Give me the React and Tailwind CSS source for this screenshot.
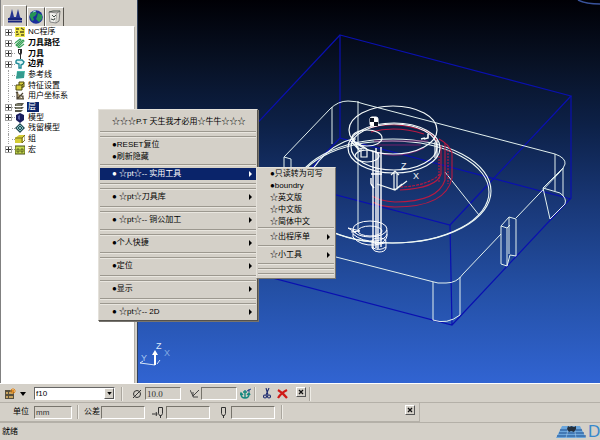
import React from 'react';
import clsx from 'clsx';

const treeItems = [
  { label: 'NC程序', icon: 'nc', expandable: true },
  { label: '刀具路径', icon: 'toolpath', expandable: true, bold: true },
  { label: '刀具', icon: 'tool', expandable: true, bold: true },
  { label: '边界', icon: 'boundary', expandable: true, bold: true },
  { label: '参考线', icon: 'pattern' },
  { label: '特征设置', icon: 'feature' },
  { label: '用户坐标系', icon: 'workplane' },
  { label: '层', icon: 'level', expandable: true, selected: true },
  { label: '模型', icon: 'model', expandable: true },
  { label: '残留模型', icon: 'stock' },
  { label: '组', icon: 'group' },
  { label: '宏', icon: 'macro', expandable: true },
];

const treeIcons = {
  nc: (
    <>
      <path d="M0 0h10v10H0z" fill="#f0e84a" />
      <path d="M1 2h3M6 1l3 2M1 5h2M5 5h4M1 8l3-1M6 8h3" stroke="#55501a" strokeWidth="1.3" />
    </>
  ),
  toolpath: (
    <path d="M0 5l5-4 1 1-5 5 1 1 6-6 1 1-6 6 1 1 5-4" stroke="#35a055" strokeWidth="1.1" fill="none" />
  ),
  tool: (
    <>
      <path d="M3 0h4v4l-1 2v4H5V6L3 4z" fill="#2c2c2c" />
      <path d="M4 1h1v3H4z" fill="#fff" />
    </>
  ),
  boundary: (
    <path d="M2 1h5l2 2-1 2-2 1v3H4V5L1 4V2z" fill="#dff6f6" stroke="#208a96" strokeWidth="1.4" />
  ),
  pattern: (
    <>
      <path d="M2 1h8l-1 7-8 1z" fill="#49b8a8" />
      <path d="M2 3h7M2 5h7M1 7h8" stroke="#187068" strokeWidth=".8" />
    </>
  ),
  feature: (
    <path d="M1 4h3V1h5v5H7v3H1zM4 4h3v3M7 4l2-2" fill="#d8cf3c" stroke="#4d4810" strokeWidth="1" />
  ),
  workplane: (
    <path d="M2 1v7h7M2 8l6-6M4 5h4v3M1 2l1-1 1 1" fill="#a89870" stroke="#4c4434" strokeWidth="1.2" />
  ),
  level: (
    <>
      <path d="M0 2l3-1h6L7 4H0zM0 5h9L7 7H0zM0 8h8l-2 2H0z" fill="#58584c" />
      <path d="M1 3h5M1 6h5" stroke="#b7b79c" strokeWidth=".7" />
    </>
  ),
  model: (
    <>
      <path d="M5 0l4 2v5l-4 3-4-3V2z" fill="#181c5c" />
      <path d="M3 3l2-1v5L3 6z" fill="#5962ad" />
    </>
  ),
  stock: (
    <>
      <path d="M0 5l5-5 5 5-5 5z" fill="#264d55" />
      <path d="M2 5l3-3 3 3-3 3zM3 3l4 4M7 3L3 7" fill="none" stroke="#8bc8c8" strokeWidth=".9" />
    </>
  ),
  group: (
    <>
      <path d="M0 4l4-3h6L8 4v5H0z" fill="#d5cd35" />
      <path d="M0 4h7v5M7 4l3-3v5L7 9" fill="none" stroke="#6c661a" strokeWidth=".9" />
    </>
  ),
  macro: (
    <>
      <path d="M0 1h10v8H0z" fill="#c4d84c" stroke="#454d16" />
      <path d="M2 4h2v3H2zM6 4h2v3H6z" fill="none" stroke="#454d16" strokeWidth=".8" />
    </>
  ),
};

const menuGroups = [
  { lines: 2, items: [{ label: '☆☆☆P.T 天生我才必用☆牛牛☆☆☆' }] },
  { lines: 1, items: [{ label: '●RESET复位' }, { label: '●刷新隐藏' }] },
  { lines: 2, items: [{ label: '● ☆pt☆-- 实用工具', sub: true, active: true }] },
  { lines: 2, items: [{ label: '● ☆pt☆刀具库', sub: true }] },
  { lines: 2, items: [{ label: '● ☆pt☆-- 铜公加工', sub: true }] },
  { lines: 2, items: [{ label: '●个人快捷', sub: true }] },
  { lines: 2, items: [{ label: '●定位', sub: true }] },
  { lines: 2, items: [{ label: '●显示', sub: true }] },
  { lines: 0, items: [{ label: '● ☆pt☆-- 2D', sub: true }] },
];

const subMenuItems = ['●只读转为可写', '●boundry', '☆英文版', '☆中文版', '☆简体中文'];

function Rule() {
  return <div className="h-[2px] border-t border-b border-t-[#9c988f] border-b-[#e9e6df]" />;
}

function MenuItem({ label, sub, active }) {
  return (
    <button
      type="button"
      role="menuitem"
      className={clsx(
        'flex h-3 w-full items-center justify-between pl-3 pr-1 text-left whitespace-pre',
        active ? 'bg-[#0a246a] text-white' : 'text-black'
      )}
    >
      <span>{label}</span>
      {sub && (
        <svg viewBox="0 0 3 6" className="h-[6px] w-[3px]" fill="currentColor">
          <path d="M0 0l3 3-3 3z" />
        </svg>
      )}
    </button>
  );
}

function ContextMenu() {
  return (
    <div
      role="menu"
      className="absolute left-[98px] top-[109px] w-[160px] border border-t-[#e4e1da] border-l-[#e4e1da] border-r-[#55524c] border-b-[#55524c] bg-[#d4d0c8] px-px pt-[6px] pb-[2px] shadow-[1px_1px_0_#77746e]"
    >
      {menuGroups.map((group, i) => (
        <div key={i}>
          {group.items.map((item) => (
            <MenuItem key={item.label} {...item} />
          ))}
          {group.lines === 1 && (
            <div className="pt-px pb-[2px]">
              <Rule />
            </div>
          )}
          {group.lines === 2 && (
            <div className="flex h-[11px] flex-col gap-[3px] pt-[3px]">
              <Rule />
              <Rule />
            </div>
          )}
        </div>
      ))}
    </div>
  );
}

function SubMenu() {
  return (
    <div
      role="menu"
      className="absolute left-[256px] top-[167px] w-[80px] border border-t-[#e4e1da] border-l-[#e4e1da] border-r-[#77746e] border-b-[#77746e] bg-[#d4d0c8] px-px pb-[3px]"
    >
      <div className="grid h-[58px] content-between">
        {subMenuItems.map((label) => (
          <MenuItem key={label} label={label} />
        ))}
      </div>
      <div className="flex flex-col gap-[2px] pt-px">
        <Rule />
        <MenuItem label="☆出程序单" sub />
        <Rule />
        <MenuItem label="☆小工具" sub />
      </div>
      <div className="flex flex-col gap-[3px] pt-[2px]">
        <Rule />
        <Rule />
        <Rule />
      </div>
    </div>
  );
}

function Explorer() {
  const tab = 'flex items-center justify-center border border-b-0 border-t-white border-l-white border-r-[#55524c]';
  return (
    <aside className="flex w-[137px] shrink-0 flex-col border-l border-[#808080] bg-[#d4d0c8]">
      <div className="flex h-[26px] items-end px-[2px]">
        <button type="button" aria-label="浏览器" className={clsx(tab, 'h-[21px] w-6')}>
          <svg viewBox="0 0 14 14" className="h-[14px] w-[14px]">
            <path d="M4 0l2 8h2l2-8 2 8 1 1H1l1-1z" fill="#26358f" />
            <path d="M0 10h14M0 12.5h14" stroke="#17257d" strokeWidth="1.8" />
          </svg>
        </button>
        <button type="button" aria-label="网页" className={clsx(tab, 'h-[19px] w-[18px]')}>
          <svg viewBox="0 0 14 14" className="h-[14px] w-[14px]">
            <circle cx="7" cy="7" r="6.8" fill="#1a2f9c" />
            <path d="M1 4l4-3 3 2-2 3-2 1 1 3-2 1-2-4zM9 3l4 2v4l-3 3-3-3 1-2z" fill="#259457" />
            <path d="M4 2l3-1" stroke="#9ad3e0" />
          </svg>
        </button>
        <button type="button" aria-label="回收站" className={clsx(tab, 'h-[19px] w-[19px]')}>
          <svg viewBox="0 0 14 14" className="h-[14px] w-[14px]">
            <path d="M1 2l8 1-1 10-6-1z" fill="#eeeeea" stroke="#888" />
            <path d="M9 3l3-2-1 10-3 2" fill="#d8d8d0" stroke="#777" />
            <path d="M1 2l4-1 7 0M4 5l2 2 2-2M3 9l3 1 1-2" stroke="#45504a" fill="none" />
          </svg>
        </button>
      </div>
      <div className="mr-[2px] flex-1 border-t border-r border-t-white border-r-[#b4b0a8] bg-white">
        <ul className="flex h-32 flex-col">
          {treeItems.map((item) => (
            <li key={item.label} className="flex flex-1 items-center pl-1">
              {item.expandable ? (
                <button
                  type="button"
                  aria-label={`展开${item.label}`}
                  className="flex h-[7px] w-[7px] shrink-0 items-center justify-center border border-[#a4a4a4] bg-white"
                >
                  <svg viewBox="0 0 5 5" className="h-[5px] w-[5px] shrink-0">
                    <path d="M0 2.5h5M2.5 0v5" stroke="#333" />
                  </svg>
                </button>
              ) : (
                <span className="ml-[3px] h-full w-1 shrink-0 border-l border-dotted border-[#a0a0a0]" />
              )}
              <span className="w-[3px] border-t border-dotted border-[#a0a0a0]" />
              <svg viewBox="0 0 10 10" className="h-[10px] w-[10px] shrink-0">
                {treeIcons[item.icon]}
              </svg>
              <span
                className={clsx(
                  'ml-[2px] px-px leading-[10px] whitespace-nowrap',
                  item.bold && 'font-bold',
                  item.selected && 'bg-[#0a246a] pr-[3px] text-white'
                )}
              >
                {item.label}
              </span>
            </li>
          ))}
        </ul>
      </div>
    </aside>
  );
}

function Viewport() {
  return (
    <main className="min-w-0 flex-1 overflow-hidden border-l border-[#30405c] bg-[linear-gradient(to_bottom,#000005_0%,#081226_17%,#0d2148_33%,#183674_52%,#2450a6_76%,#3164d2_100%)]">
      <svg viewBox="138 0 462 383" preserveAspectRatio="xMinYMin slice" className="block h-full w-full" fill="none">
        {/* stock block */}
        <g stroke="#0a10b0" strokeWidth="1.2">
          <path d="M340 35L571 96L450 225L219 164Z" />
          <path d="M219 164V264L452 325L571 198V96M450 225L452 325" />
          <path d="M340 35V138L571 199M340 138L219 264" />
        </g>
        {/* part outline */}
        <g stroke="#e2f0ee" strokeWidth="1">
          <path d="M284 157L330 109Q338 101 348 101Q357 101 364 104L555 154Q566 158 565 164Q564 168 559 173L516 218M501 234L463 274Q457 283 446 283Q438 284 430 281L336 257L225 228" />
          <path d="M332 107V144M358 101V230M555 154V191M563 168V196M284 157V168M284 157L291 159V168" />
          <path d="M543 188L560 193Q567 198 565 204L550 219ZM543 188L563 168" />
          <path d="M501 226L509 217L516 219V256L510 255L507 266L501 264ZM501 226L507 228V266M509 217V254M507 228L510 225" />
          <path d="M433 282V320Q447 325 460 315V277M445 172L479 215" />
        </g>
        {/* pocket */}
        <g stroke="#eef8f4" strokeWidth="1.1">
          <ellipse cx="393" cy="191" rx="98" ry="52" />
          <ellipse cx="392" cy="192" rx="97" ry="51" />
          <path d="M312 170Q326 150 340 144Q349 139 356 139" />
        </g>
        {/* inner boss walls */}
        <g stroke="#b81a42" strokeWidth="1.1">
          <path d="M369 128Q392 121 419 129Q435 133 437 142M371 132Q396 125 424 134" />
          <path d="M376 152Q398 160 424 148M374 141H428M377 145H421" stroke="#73206c" />
          <path d="M439 139Q449 144 452 153V178Q446 207 395 207Q381 207 373 202" />
          <path d="M445 143V180Q438 202 395 202Q380 201 372 196M441 145V174Q437 188 400 190" />
          <path d="M448 150V184M439 156V182" strokeDasharray="2 1" />
          <path d="M400 187Q429 186 441 173" strokeDasharray="3 1" />
        </g>
        <g stroke="#f6fbfa" strokeWidth="1.2">
          <ellipse cx="393" cy="130" rx="44" ry="24" />
          <ellipse cx="394" cy="148" rx="46" ry="25" />
          <ellipse cx="394" cy="147" rx="43" ry="23" />
          <ellipse cx="367" cy="138" rx="15" ry="8" />
          <ellipse cx="367" cy="156" rx="12" ry="6" />
          <path d="M352 136L358 148L364 149M350 140L360 151M356 142L367 149M361 148V157H367V149M435 142V158M437 140V157" />
          <path d="M421 139L425 138M424 139L428 138V134" strokeWidth="1.6" />
        </g>
        {/* tool */}
        <g stroke="#fff" strokeWidth="1.4">
          <path d="M373 151V249M376 148V248M378 152V249M381 147V247" />
          <path d="M371 174H382M371 184L374 188M371 178V184" />
          <g strokeWidth="1">
            <ellipse cx="370" cy="229" rx="17" ry="8" />
            <ellipse cx="370" cy="231" rx="12" ry="5" />
            <path d="M353 230V237Q360 246 375 245Q386 243 387 236V230M353 234Q362 242 376 241Q386 239 387 234M348 228L360 231L351 232M348 228L356 233" />
            <ellipse cx="379" cy="241" rx="7" ry="3" />
            <path d="M372 242V248Q374 252 379 252Q385 252 386 248V242M372 247Q378 252 386 247" />
          </g>
        </g>
        {/* datum marker */}
        <rect x="370" y="117" width="8" height="9" rx="2" fill="#fff" stroke="#fff" />
        <path d="M370 118h4v4h-4zM374 122h4v4h-4z" fill="#0b1222" />
        {/* work axes */}
        <path d="M394 190V172M391 175L395 171L399 175M377 184L395 190L407 181M394 189H397V174M395 190L402 184" stroke="#f2f8f6" strokeWidth="1.2" />
        <g fill="#f2f6f5" className="font-['Liberation_Sans',sans-serif] text-[9px]">
          <text x="401" y="169">Z</text>
          <text x="413" y="179">X</text>
        </g>
        {/* view axes */}
        <path d="M155 365V352M140 363L155 365M140 363L143 361M160 360L157 364" stroke="#d8e6f6" />
        <path d="M155 365V354" stroke="#fff" strokeWidth="2" />
        <path d="M152 355L155 350L158 355Z" fill="#fff" />
        <g fill="#dcebfa" className="font-['Liberation_Sans',sans-serif] text-[9px]">
          <text x="156" y="349">Z</text>
          <text x="164" y="356" fill="#83aae2">X</text>
          <text x="141" y="361" fill="#a9c6ef">Y</text>
        </g>
        <path d="M578 0Q586 4 600 4" stroke="#39539b" strokeWidth="1.5" />
      </svg>
    </main>
  );
}

function Field({ label, value, className }) {
  return (
    <input
      aria-label={label}
      defaultValue={value}
      className={clsx(
        'h-[13px] shrink-0 border border-t-[#77746c] border-l-[#77746c] border-r-white border-b-white bg-[#d4d0c8] px-px text-[#333] outline-none',
        className
      )}
    />
  );
}

function Divider() {
  return <span className="h-[14px] w-[2px] shrink-0 border-l border-r border-l-[#aaa69e] border-r-[#eeece6]" />;
}

function CloseButton() {
  return (
    <button
      type="button"
      aria-label="关闭"
      className="flex h-[10px] w-[10px] shrink-0 items-center justify-center self-start border border-t-white border-l-white border-r-[#555] border-b-[#555]"
    >
      <svg viewBox="0 0 6 6" className="h-[6px] w-[6px]">
        <path d="M1 1l4 4M5 1L1 5" stroke="#111" strokeWidth="1.3" />
      </svg>
    </button>
  );
}

function ToolBar() {
  return (
    <div className="flex h-[19px] items-center border-b border-[#b4b0a8] pt-px">
      <button type="button" aria-label="创建刀具" className="ml-[5px] flex items-center gap-1">
        <svg viewBox="0 0 11 11" className="h-[11px] w-[11px]">
          <path d="M0 2h9v9H0z" fill="#57503f" />
          <path d="M1 4h2v2H1zM4 4h4v2H4zM1 8h2v2H1zM4 8h4v2H4z" fill="#c9a45f" />
          <path d="M8 0v6M5 3h6M6 1l4 4M10 1L6 5" stroke="#e38a20" />
        </svg>
        <svg viewBox="0 0 6 4" className="h-1 w-[6px]">
          <path d="M0 0h6L3 4z" />
        </svg>
      </button>
      <div className="relative ml-2 h-[13px] w-[81px] shrink-0 border border-t-[#666] border-l-[#666] border-r-white border-b-white bg-white">
        <select aria-label="激活刀具" className="block h-full w-full appearance-none px-px leading-[11px] outline-none">
          <option>f10</option>
        </select>
        <span className="pointer-events-none absolute top-0 right-0 flex h-[11px] w-[10px] items-center justify-center border border-t-white border-l-white border-r-[#555] border-b-[#555] bg-[#d4d0c8]">
          <svg viewBox="0 0 6 4" className="h-[3px] w-[5px]">
            <path d="M0 0h6L3 4z" />
          </svg>
        </span>
      </div>
      <div className="ml-[6px] flex items-center gap-[3px]">
        <Divider />
        <svg viewBox="0 0 10 10" className="ml-[6px] h-[10px] w-[10px]" fill="none" stroke="#333">
          <circle cx="5" cy="5" r="3.5" />
          <path d="M1 9l8-8" />
        </svg>
        <Field label="直径" value="10.0" className="w-[36px] font-['Liberation_Serif',serif] text-[9px]" />
      </div>
      <svg viewBox="0 0 9 9" className="ml-[9px] h-[9px] w-[9px] shrink-0" fill="none" stroke="#444">
        <path d="M0 1l3 6M9 1L3 7M3 3v5h5" />
      </svg>
      <div className="ml-[2px] flex items-center gap-[3px]">
        <Field label="刀尖半径" className="w-[36px]" />
        <button type="button" aria-label="固定">
          <svg viewBox="0 0 11 11" className="h-[11px] w-[11px]" fill="none" stroke="#16887f" strokeWidth="1.4">
            <path d="M5 2v8M3 4h4M1 6q0 4 4 4t4-4M0 7l1-2 2 2M7 7l2-2 1 2" />
            <path d="M7 3l4-2M9 1v3" stroke="#1d3f87" strokeWidth="1" />
          </svg>
        </button>
        <Divider />
      </div>
      <button type="button" aria-label="剪切" className="ml-[7px]">
        <svg viewBox="0 0 8 11" className="h-[11px] w-2" fill="none" stroke="#1d2b70" strokeWidth="1.1">
          <path d="M3 0l2 7M6 0L3 7" />
          <circle cx="2" cy="8.5" r="1.5" />
          <circle cx="6" cy="8.5" r="1.5" />
        </svg>
      </button>
      <button type="button" aria-label="删除" className="ml-[6px]">
        <svg viewBox="0 0 11 10" className="h-[10px] w-[11px]" fill="none" stroke="#cf1b18" strokeWidth="2.2">
          <path d="M1 1q5 3 9 8M10 1Q4 4 1 9" />
        </svg>
      </button>
      <div className="ml-2 flex h-[14px] items-center gap-[3px]">
        <CloseButton />
        <Divider />
      </div>
    </div>
  );
}

function UnitBar() {
  return (
    <div className="flex h-[19px] w-[420px] max-w-full items-center border-r border-b border-[#b4b0a8]">
      <span className="ml-[13px] w-[21px] shrink-0">单位</span>
      <Field label="单位" value="mm" className="w-[38px]" />
      <div className="mr-[5px] ml-[5px] flex">
        <Divider />
      </div>
      <span className="w-[17px] shrink-0">公差</span>
      <Field label="公差" className="w-[44px]" />
      <svg viewBox="0 0 12 13" className="mr-[2px] ml-[7px] h-[13px] w-3 shrink-0" fill="none" stroke="#333">
        <path d="M0 8h5M6.5 1.5h4v6l-1 2h-2l-1-2zM8.5 9v3M4 6l1 2-1 2" />
      </svg>
      <Field label="余量" className="w-[44px]" />
      <svg viewBox="0 0 7 13" className="mr-1 ml-[10px] h-[13px] w-[7px] shrink-0" fill="none" stroke="#333">
        <path d="M1.5 1.5h4v6l-1 2h-2l-1-2zM3.5 9v3" />
      </svg>
      <Field label="轴向余量" className="w-[44px]" />
      <div className="ml-[6px] flex">
        <Divider />
      </div>
      <div className="mr-1 ml-auto flex h-[14px]">
        <CloseButton />
      </div>
    </div>
  );
}

function StatusBar() {
  return (
    <footer className="flex h-[18px] items-center justify-between overflow-hidden border-t border-[#b4b0a8] pl-[2px]">
      <span>就绪</span>
      <div className="flex w-[44px] items-center">
        <svg viewBox="0 0 32 15" className="h-[15px] w-8 shrink-0">
          <path d="M6 2h18l6 12H0z" fill="#6ba6dc" />
          <path d="M4 6h22M3 9h25M1 12h29" stroke="#1c4d8c" strokeWidth="1.1" />
          <path d="M10 14l3-12M20 14L18 2" stroke="#a7c9e8" strokeWidth=".6" />
          <path d="M12 2l2 1 1-1 3 1 2-1v3l-2 3-3-1-2 1-2-3z" fill="#26303c" />
        </svg>
        <span className="font-['Liberation_Sans',sans-serif] text-[17px] leading-4 text-[#3789cc]">D</span>
      </div>
    </footer>
  );
}

export default function App() {
  return (
    <div className="relative flex h-screen flex-col overflow-hidden bg-[#d4d0c8] font-['Liberation_Sans','Noto_Sans_CJK_SC',sans-serif] text-[8px] leading-3 text-black">
      <div className="flex min-h-0 flex-1">
        <Explorer />
        <Viewport />
      </div>
      <div className="border-t border-white">
        <ToolBar />
        <UnitBar />
        <StatusBar />
      </div>
      <ContextMenu />
      <SubMenu />
    </div>
  );
}
